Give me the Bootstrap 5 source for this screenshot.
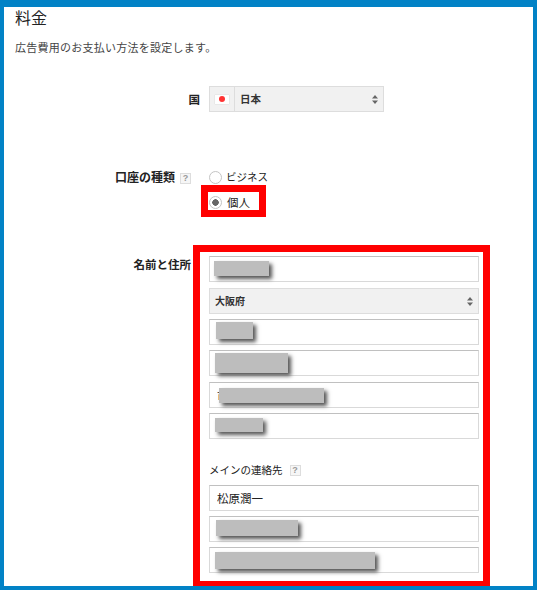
<!DOCTYPE html>
<html lang="ja">
<head>
<meta charset="utf-8">
<title>料金</title>
<link rel="stylesheet" href="https://cdn.jsdelivr.net/npm/bootstrap@5.3.0/dist/css/bootstrap.min.css">
<style>
html,body{margin:0;height:590px;overflow:hidden;background:#fff}
body{font-family:"Noto Sans CJK JP","Liberation Sans",sans-serif;font-size:12px;color:#222}
.frame{position:relative;box-sizing:border-box;height:590px;width:537px;border-style:solid;border-color:#0282c6;border-width:7px 4px 4px 4px;overflow:hidden}
.ttl{font-size:16px;font-weight:400;line-height:22px;margin:-1px 0 0 11px;color:#222}
.desc{font-size:11px;line-height:16px;letter-spacing:.25px;margin:11px 0 0 11px;color:#444}
.lbl{width:187px;flex:none;text-align:right;font-weight:700;font-size:11.5px;color:#222;line-height:16px}
.lbl-wide{width:196px}
.lbl-type{font-size:12px}
.row-country{margin-top:31px;height:26px}
.row-type{margin-top:57px;height:60px}
.row-addr{margin-top:27px}
.gap-l{padding-left:18px}
.gap-c{padding-left:9px}
.pick{width:175px;height:26px;border:1px solid #ddd;background:#f1f1f1;font-weight:700;font-size:10.5px;color:#333}
.flagcell{width:25px;height:24px;border-right:1px solid #ddd}
.flagbox{width:14px;height:9px;background:#fff;box-shadow:0 0 1px #bbb}
.flagdot{width:6px;height:6px;background:#f33;border-radius:50%}
.pick-txt{padding-left:5px}
.arrows{margin-left:auto;margin-right:5px}
.fld{position:relative;width:270px;height:26px}
.fld .form-control,.fld .pick-wide{display:block;width:270px;height:26px;padding:0 7px;border-radius:0;border:1px solid #d9d9d9;border-top-color:#c0c0c0;font-size:11.5px;color:#222;line-height:24px;font-family:inherit}
.fld .pick-wide{border:1px solid #ddd;background:#f1f1f1;font-weight:700;font-size:10px;color:#333;padding-left:5px;padding-right:5px}
.s6{margin-top:6px}
.s5{margin-top:5px}
.sect{font-size:10.5px;line-height:16px;margin-top:23px;margin-bottom:7px;color:#222}
.hlp{display:inline-block;width:11px;height:11px;border:1px solid #ddd;background:#f6f6f6;color:#999;font-size:9px;line-height:9px;text-align:center;font-weight:700;font-family:"Liberation Sans",sans-serif;vertical-align:1px}
.hlp-a{margin-left:5px}
.hlp-b{margin-left:7px}
.rad{width:13px;height:13px;margin:0;border:1px solid #c4c4c4;border-radius:50%;background:#fff;appearance:none;flex:none}
.rad:checked{background:radial-gradient(circle,#666 0 3px,#fff 3.5px);border-color:#c4c4c4}
.rad-row{height:16px;font-size:11.5px;color:#222;gap:5px;line-height:16px}
.rad-biz{font-size:10.5px;gap:4px}
.rad-two{margin-top:9px}
.mask{position:absolute;background:#bdbdbd;box-shadow:3px 3px 4px #555}
.m1{left:5px;top:5px;width:55px;height:15px}
.m2{left:7px;top:3px;width:37px;height:17px}
.m3{left:6px;top:3px;width:73px;height:20px}
.m4{left:10px;top:6px;width:105px;height:15px}
.m5{left:6px;top:5px;width:48px;height:14px}
.m6{left:7px;top:4px;width:82px;height:16px}
.m7{left:6px;top:5px;width:160px;height:17px}
.hl{position:absolute;border:7px solid #f00;pointer-events:none}
.hl-a{left:197px;top:178px;width:65px;height:32px}
.hl-b{left:189px;top:238px;width:297px;height:343px}
</style>
</head>
<body>
<div class="frame">
  <h1 class="ttl">料金</h1>
  <p class="desc">広告費用のお支払い方法を設定します。</p>

  <div class="d-flex align-items-center row-country">
    <div class="lbl lbl-wide">国</div>
    <div class="gap-c">
      <div class="pick d-flex align-items-center">
        <div class="flagcell d-flex align-items-center justify-content-center">
          <div class="flagbox d-flex align-items-center justify-content-center"><div class="flagdot"></div></div>
        </div>
        <span class="pick-txt">日本</span>
        <svg class="arrows" width="6" height="9" viewBox="0 0 6 9"><path d="M3 0 6 3.5H0zM3 9 0 5.5h6z" fill="#666"/></svg>
      </div>
    </div>
  </div>

  <div class="d-flex row-type">
    <div class="lbl lbl-type">口座の種類<span class="hlp hlp-a">?</span></div>
    <div class="gap-l">
      <div class="d-flex align-items-center rad-row rad-biz"><input class="rad" type="radio" name="t" aria-label="ビジネス"><span>ビジネス</span></div>
      <div class="d-flex align-items-center rad-row rad-two"><input class="rad" type="radio" name="t" checked aria-label="個人"><span>個人</span></div>
    </div>
  </div>

  <div class="d-flex row-addr">
    <div class="lbl">名前と住所</div>
    <div class="gap-l">
      <div class="fld"><input class="form-control" type="text" aria-label="名前"><div class="mask m1"></div></div>
      <div class="fld s6"><div class="pick-wide d-flex align-items-center justify-content-between"><span>大阪府</span><svg width="6" height="9" viewBox="0 0 6 9"><path d="M3 0 6 3.5H0zM3 9 0 5.5h6z" fill="#666"/></svg></div></div>
      <div class="fld s5"><input class="form-control" type="text" aria-label="住所1"><div class="mask m2"></div></div>
      <div class="fld s5"><input class="form-control" type="text" aria-label="住所2"><div class="mask m3"></div></div>
      <div class="fld s6"><input class="form-control" type="text" value="市" aria-label="住所3"><div class="mask m4"></div></div>
      <div class="fld s5"><input class="form-control" type="text" aria-label="住所4"><div class="mask m5"></div></div>
      <div class="sect">メインの連絡先<span class="hlp hlp-b">?</span></div>
      <div class="fld"><input class="form-control" type="text" value="松原潤一" aria-label="氏名"></div>
      <div class="fld s5"><input class="form-control" type="text" aria-label="電話"><div class="mask m6"></div></div>
      <div class="fld s5"><input class="form-control" type="text" aria-label="メール"><div class="mask m7"></div></div>
    </div>
  </div>

  <div class="hl hl-a"></div>
  <div class="hl hl-b"></div>
</div>
<script src="https://cdn.jsdelivr.net/npm/bootstrap@5.3.0/dist/js/bootstrap.bundle.min.js"></script>
</body>
</html>
